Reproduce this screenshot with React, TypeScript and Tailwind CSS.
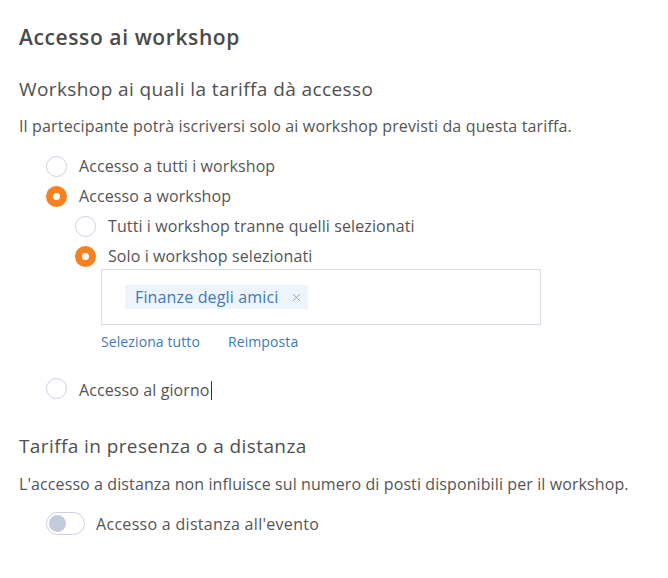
import { X } from "lucide-react";

const font = { fontFamily: "'Open Sans', Lato, sans-serif" };

function Radio({ checked, label, cursor }: { checked?: boolean; label: string; cursor?: boolean }) {
  return (
    <div className="flex h-[30px] items-center gap-3">
      {checked ? (
        <span className="flex h-[21px] w-[21px] shrink-0 items-center justify-center rounded-full bg-[#f5821f]">
          <span className="h-[7px] w-[7px] rounded-full bg-white" />
        </span>
      ) : (
        <span className="h-[21px] w-[21px] shrink-0 rounded-full border border-[#c9d1e0] bg-white" />
      )}
      <span className="text-[16px] leading-[20px] tracking-[0.1px] text-[#555]">
        {label}
        {cursor && <span className="ml-px inline-block h-[19px] w-px translate-y-[4px] bg-[#333]" />}
      </span>
    </div>
  );
}

export default function App() {
  return (
    <div className="min-h-[578px] w-[668px] bg-white px-[19px] pt-[25px]" style={font}>
      <h1 className="text-[21px] leading-[24px] font-semibold tracking-[0.6px] text-[#4a4a4a]">
        Accesso ai workshop
      </h1>

      <h2 className="mt-[29px] text-[19px] leading-[22px] tracking-[0.4px] text-[#4f4f4f]">
        Workshop ai quali la tariffa dà accesso
      </h2>
      <p className="mt-[16px] text-[16px] leading-[20px] tracking-[0.15px] text-[#555]">
        Il partecipante potrà iscriversi solo ai workshop previsti da questa tariffa.
      </p>

      <div className="mt-[15px] pl-[27px]">
        <Radio label="Accesso a tutti i workshop" />
        <Radio checked label="Accesso a workshop" />
        <div className="pl-[29px]">
          <Radio label="Tutti i workshop tranne quelli selezionati" />
          <Radio checked label="Solo i workshop selezionati" />
          <div className="pl-[26px]">
            <div className="mt-[-2px] flex h-[56px] w-[440px] items-center border border-[#d6dde5] px-[23px]">
              <span className="flex h-[24px] items-center gap-[12px] bg-[#eef4fc] pl-[10px] pr-[5px] text-[16px] tracking-[0.15px] text-[#3d7bb8]">
                Finanze degli amici
                <X size={13} strokeWidth={1.5} className="text-[#7a9cc4]" />
              </span>
            </div>
            <div className="mt-[8px] flex gap-[28px] text-[14px] leading-[18px] tracking-[0.1px] text-[#3d7bb8]">
              <span>Seleziona tutto</span>
              <span>Reimposta</span>
            </div>
          </div>
        </div>
        <div className="mt-[22px]">
          <Radio label="Accesso al giorno" cursor />
        </div>
      </div>

      <h2 className="mt-[32px] text-[19px] leading-[22px] tracking-[0.4px] text-[#4f4f4f]">
        Tariffa in presenza o a distanza
      </h2>
      <p className="mt-[17px] text-[16px] leading-[20px] tracking-[0.1px] text-[#555]">
        L'accesso a distanza non influisce sul numero di posti disponibili per il workshop.
      </p>

      <div className="mt-[18px] flex items-center gap-[11px] pl-[27px]">
        <span className="flex h-[23px] w-[39px] items-center rounded-full border border-[#c9d1e0] bg-white px-[2px]">
          <span className="h-[17px] w-[17px] rounded-full bg-[#c4cbdb]" />
        </span>
        <span className="text-[16px] leading-[20px] tracking-[0.3px] text-[#555]">
          Accesso a distanza all'evento
        </span>
      </div>
    </div>
  );
}
